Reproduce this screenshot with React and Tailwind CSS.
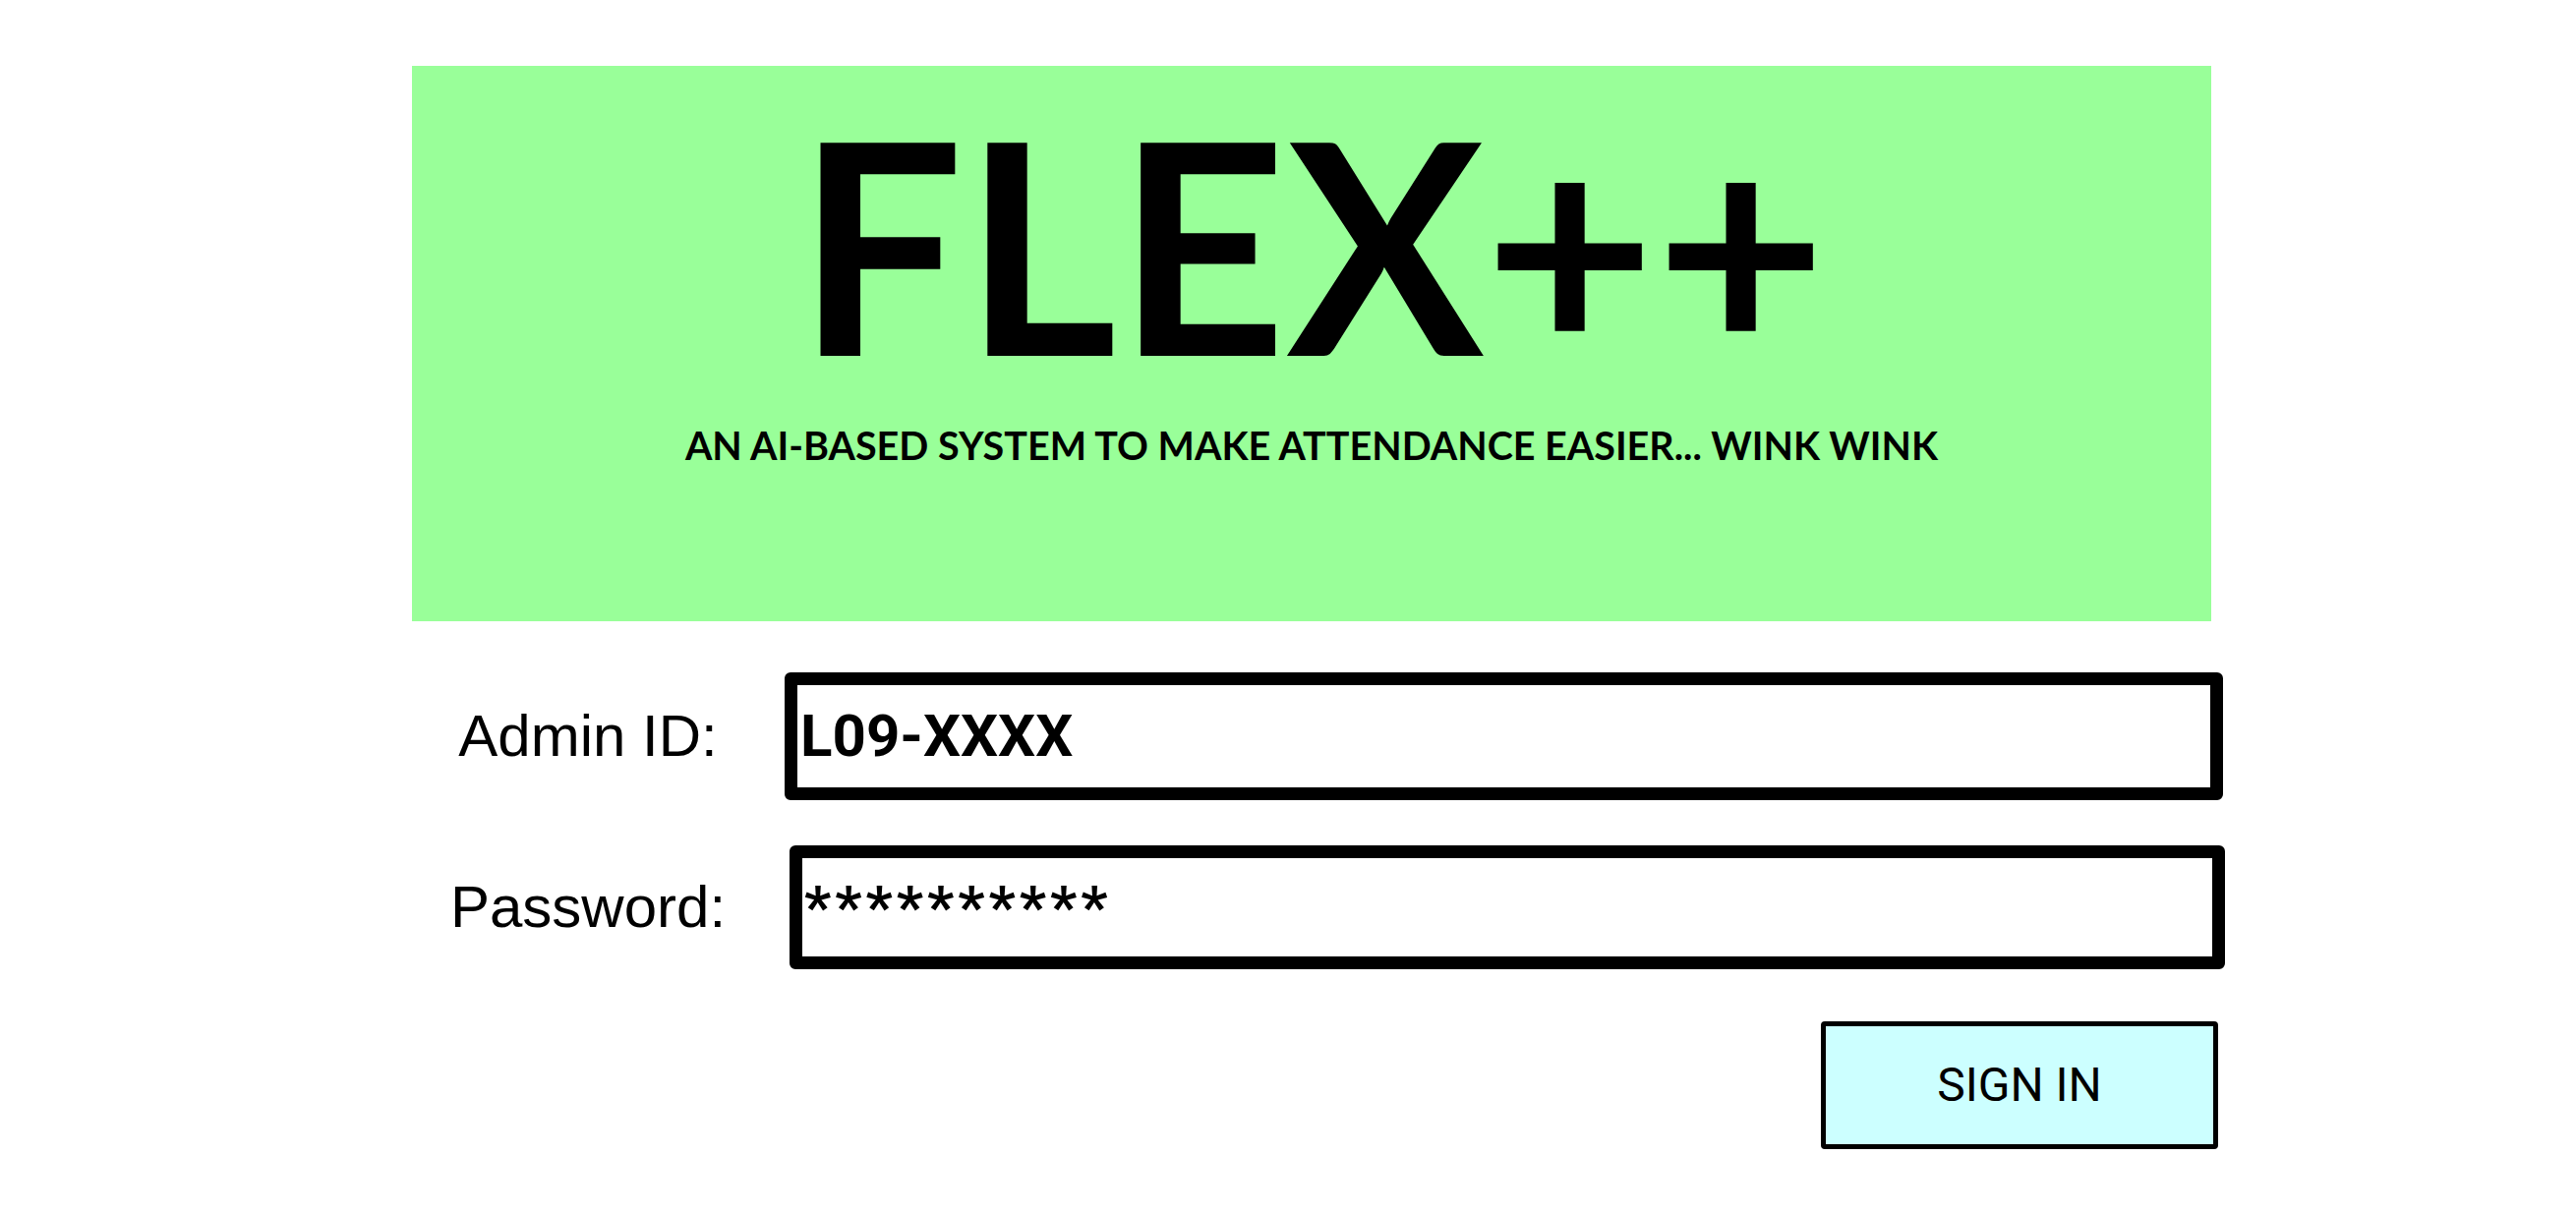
import React, { useState } from "react";

const App = () => {
  const [adminId, setAdminId] = useState("L09-XXXX");
  const [password, setPassword] = useState("**********");

  return (
    <div className="w-[2620px] h-[1234px] bg-white">
      <div className="ml-[419px] w-[1845px] pt-[67px]">
        {/* banner */}
        <div className="w-[1830px] h-[565px] bg-[#99ff99] flex flex-col items-center pt-[29px] font-['Lato',sans-serif] text-black">
          <h1 className="text-[300px] leading-none font-bold">FLEX++</h1>
          <p className="mt-[37px] text-[39.5px] leading-none font-bold">
            AN AI-BASED SYSTEM TO MAKE ATTENDANCE EASIER... WINK WINK
          </p>
        </div>

        {/* form */}
        <div className="mt-[52px] flex items-center">
          <label className="w-[358px] text-center text-[60px] font-['Liberation_Sans',Arial,sans-serif] text-black">
            Admin ID:
          </label>
          <div className="ml-[21px] w-[1463px] h-[130px] border-[13px] border-black rounded-[6px] flex items-center">
            <input
              value={adminId}
              onChange={(e) => setAdminId(e.target.value)}
              className="w-full bg-transparent outline-none pl-[3px] text-[60px] font-bold font-['Roboto',sans-serif] text-black"
            />
          </div>
        </div>

        <div className="mt-[46px] flex items-center">
          <label className="w-[358px] text-center text-[60px] font-['Liberation_Sans',Arial,sans-serif] text-black">
            Password:
          </label>
          <div className="ml-[26px] w-[1460px] h-[126px] border-[13px] border-black rounded-[6px] flex items-center">
            <input
              value={password}
              onChange={(e) => setPassword(e.target.value)}
              className="w-full bg-transparent outline-none pl-[2px] text-[60px] tracking-[4px] font-bold font-['Roboto',sans-serif] text-black"
            />
          </div>
        </div>

        <div className="mt-[53px] flex">
          <button className="ml-[1433px] w-[404px] h-[130px] bg-[#ccffff] border-[5px] border-black rounded-[4px] text-[48px] font-['Roboto',sans-serif] text-black">
            SIGN IN
          </button>
        </div>
      </div>
    </div>
  );
};

export default App;
